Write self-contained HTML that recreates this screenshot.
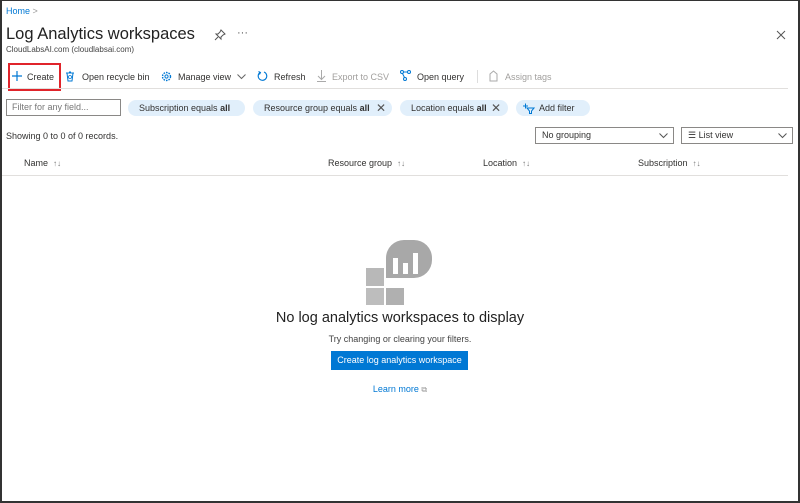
<!DOCTYPE html>
<html><head><meta charset="utf-8"><style>
*{margin:0;padding:0;box-sizing:border-box}
body{width:800px;height:503px;background:#fff;font-family:"Liberation Sans",sans-serif;color:#323130;position:relative;overflow:hidden}
.frame{position:absolute;left:0;top:0;width:800px;height:503px;border:2px solid #333;border-top-width:1px}
.a{position:absolute;white-space:nowrap}
.t{font-size:9px}
.pill{position:absolute;height:16px;border-radius:8px;background:#e1effb;font-size:9px;line-height:16px;padding:0 0 0 11px}
.pill b{font-weight:bold}
.x{position:absolute;top:0;font-size:12px;color:#555}
.dd{position:absolute;height:17px;border:1px solid #8a8886;font-size:9px;line-height:15px;padding-left:6px}
.hd{position:absolute;top:158px;font-size:9px;color:#323130}
.ar{color:#777;font-size:8px;margin-left:5px}
svg{position:absolute}
</style></head><body>
<div class="frame"></div>
<div class="a" style="left:6px;top:6px;font-size:9px;color:#0078d4">Home <span style="color:#999">&gt;</span></div>
<div class="a" style="left:6px;top:25px;font-size:16.5px;color:#222">Log Analytics workspaces</div>
<svg style="left:214px;top:29px" width="12" height="12" viewBox="0 0 12 12"><path d="M7 1l4 4-2 1-2 2 0 2-5-5 2 0 2-2z M4 8l-3 3" fill="none" stroke="#555" stroke-width="1"/></svg>
<div class="a" style="left:237px;top:27px;font-size:11px;color:#555">···</div>
<svg style="left:776px;top:30px" width="10" height="10" viewBox="0 0 10 10"><path d="M1 1L9 9M9 1L1 9" stroke="#555" stroke-width="1"/></svg>
<div class="a" style="left:6px;top:45px;font-size:8px;color:#444">CloudLabsAI.com (cloudlabsai.com)</div>

<div class="a" style="left:8px;top:63px;width:53px;height:28px;border:2px solid #e0242b"></div>
<svg style="left:12px;top:71px" width="10" height="10"><path d="M5 0V10M0 5H10" stroke="#0078d4" stroke-width="1.2"/></svg>
<div class="a t" style="left:27px;top:72px">Create</div>
<svg style="left:65px;top:71px" width="10" height="11" viewBox="0 0 10 11"><path d="M1 2h8M2 2l1 8h4l1-8M4 1h2" fill="none" stroke="#0078d4" stroke-width="1"/><circle cx="5" cy="6" r="1.5" fill="none" stroke="#0078d4" stroke-width=".8"/></svg>
<div class="a t" style="left:82px;top:72px">Open recycle bin</div>
<svg style="left:161px;top:71px" width="11" height="11" viewBox="0 0 11 11"><circle cx="5.5" cy="5.5" r="4" fill="none" stroke="#0078d4" stroke-width="1.4" stroke-dasharray="1.6 1"/><circle cx="5.5" cy="5.5" r="1.6" fill="none" stroke="#0078d4" stroke-width="1"/></svg>
<div class="a t" style="left:178px;top:72px">Manage view</div>
<svg style="left:237px;top:74px" width="9" height="6"><path d="M0.5 0.5L4.5 4.5L8.5 0.5" fill="none" stroke="#666"/></svg>
<svg style="left:257px;top:70px" width="11" height="12" viewBox="0 0 11 12"><path d="M3 2.5A4.3 4.3 0 1 0 7 2" fill="none" stroke="#0078d4" stroke-width="1.1"/><path d="M1.5 1.5l2 1-1 2" fill="none" stroke="#0078d4"/></svg>
<div class="a t" style="left:274px;top:72px">Refresh</div>
<svg style="left:317px;top:70px" width="9" height="12"><path d="M4.5 0V9M1 6l3.5 3.5L8 6M0 11.5H9" fill="none" stroke="#aaa"/></svg>
<div class="a t" style="left:332px;top:72px;color:#a19f9d">Export to CSV</div>
<svg style="left:400px;top:70px" width="11" height="11" viewBox="0 0 11 11"><circle cx="2" cy="2" r="1.5" fill="none" stroke="#0078d4"/><circle cx="9" cy="2" r="1.5" fill="none" stroke="#0078d4"/><circle cx="5" cy="9" r="1.5" fill="none" stroke="#0078d4"/><path d="M3.5 2H7.5M2.5 3.5L4.5 7.5" stroke="#0078d4"/></svg>
<div class="a t" style="left:417px;top:72px">Open query</div>
<div class="a" style="left:477px;top:70px;width:1px;height:13px;background:#ddd"></div>
<svg style="left:489px;top:70px" width="9" height="12"><path d="M1 4L4.5 1L8 4V11H1Z" fill="none" stroke="#aaa"/></svg>
<div class="a t" style="left:505px;top:72px;color:#a19f9d">Assign tags</div>
<div class="a" style="left:2px;top:88px;width:786px;height:1px;background:#e1dfdd"></div>

<div class="a" style="left:6px;top:99px;width:115px;height:17px;border:1px solid #8a8886;font-size:9px;line-height:15px;padding-left:5px;color:#777">Filter for any field...</div>
<div class="pill" style="left:128px;top:100px;width:117px">Subscription equals <b>all</b></div>
<div class="pill" style="left:253px;top:100px;width:139px">Resource group equals <b>all</b><span class="x" style="left:123px">✕</span></div>
<div class="pill" style="left:400px;top:100px;width:108px">Location equals <b>all</b><span class="x" style="left:91px">✕</span></div>
<div class="pill" style="left:516px;top:100px;width:74px;padding-left:23px">Add filter</div>
<svg style="left:523px;top:103px" width="12" height="11"><path d="M0 3H5M2.5 0.5V5.5" stroke="#0078d4"/><path d="M4 5H11L8.5 8V10.5H6.5V8Z" fill="none" stroke="#0078d4"/></svg>

<div class="a t" style="left:6px;top:131px">Showing 0 to 0 of 0 records.</div>
<div class="dd" style="left:535px;top:127px;width:139px">No grouping</div>
<svg style="left:659px;top:133px" width="9" height="6"><path d="M0.5 0.5L4.5 4.5L8.5 0.5" fill="none" stroke="#555"/></svg>
<div class="dd" style="left:681px;top:127px;width:112px">☰ List view</div>
<svg style="left:778px;top:133px" width="9" height="6"><path d="M0.5 0.5L4.5 4.5L8.5 0.5" fill="none" stroke="#555"/></svg>

<div class="hd" style="left:24px">Name<span class="ar">↑↓</span></div>
<div class="hd" style="left:328px">Resource group<span class="ar">↑↓</span></div>
<div class="hd" style="left:483px">Location<span class="ar">↑↓</span></div>
<div class="hd" style="left:638px">Subscription<span class="ar">↑↓</span></div>
<div class="a" style="left:2px;top:175px;width:786px;height:1px;background:#e1dfdd"></div>

<svg style="left:366px;top:240px" width="68" height="66" viewBox="0 0 68 66">
<path d="M20 38V18A18 18 0 0 1 38 0H48A18 18 0 0 1 66 18V20A18 18 0 0 1 48 38Z" fill="#a8a8a8"/>
<rect x="0" y="28" width="18" height="18" fill="#b8b8b8"/>
<rect x="0" y="48" width="18" height="17" fill="#bdbdbd"/>
<rect x="20" y="48" width="18" height="17" fill="#b0b0b0"/>
<rect x="27" y="18" width="5" height="16" fill="#fff"/>
<rect x="37" y="23" width="5" height="11" fill="#fff"/>
<rect x="47" y="13" width="5" height="21" fill="#fff"/>
</svg>
<div class="a" style="left:0;width:800px;text-align:center;top:310px;font-size:14.5px;color:#222">No log analytics workspaces to display</div>
<div class="a" style="left:0;width:800px;text-align:center;top:334px;font-size:9px;color:#444">Try changing or clearing your filters.</div>
<div class="a" style="left:331px;top:351px;width:137px;height:19px;background:#0078d4;color:#fff;font-size:9px;line-height:19px;text-align:center">Create log analytics workspace</div>
<div class="a" style="left:0;width:800px;text-align:center;top:384px;font-size:9px;color:#0078d4">Learn more <span style="font-size:8px;color:#999">⧉</span></div>
</body></html>
